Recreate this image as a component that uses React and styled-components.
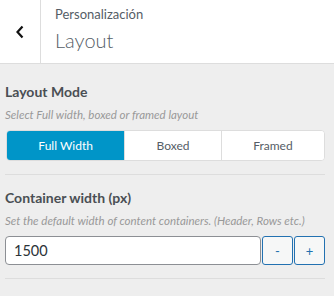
import React, { useState } from 'react';
import styled, { createGlobalStyle } from 'styled-components';

const GlobalStyle = createGlobalStyle`
  body {
    margin: 0;
    background: #eeeeee;
    font-family: Lato, "Open Sans", sans-serif;
    overflow: hidden;
  }
`;

const Header = styled.div`
  display: flex;
  height: 63px;
  background: #fff;
  border-bottom: 1px solid #dddddd;
`;

const BackButton = styled.button`
  width: 41px;
  border: 0;
  border-right: 1px solid #dddddd;
  background: transparent;
  display: flex;
  align-items: center;
  justify-content: center;
  padding: 0;
  cursor: pointer;
`;

const TitleBlock = styled.div`
  padding: 4px 0 0 14px;
  color: #555d66;
`;

const Crumb = styled.div`
  font-size: 13px;
  line-height: 20px;
`;

const Title = styled.div`
  font-size: 20px;
  font-weight: 300;
  line-height: 26px;
  margin-top: 3px;
`;

const Body = styled.div`
  padding: 0 9px 0 5px;
`;

const Section = styled.div`
  padding-top: ${p => p.$first ? 18 : 13}px;
  padding-bottom: 13px;
  border-bottom: 1px solid #dddddd;
`;

const Heading = styled.div`
  font-size: 14px;
  font-weight: 700;
  color: #4a4f54;
  line-height: 20px;
`;

const Desc = styled.div`
  font-size: 11.5px;
  font-style: italic;
  color: #999999;
  line-height: 16px;
  margin: 5px 0 7px;
  white-space: nowrap;
`;

const Group = styled.div`
  display: flex;
  margin-left: 1px;
  height: 29px;
  border: 1px solid #dddddd;
  border-radius: 4px;
  overflow: hidden;
  background: #fff;
`;

const Segment = styled.button`
  flex: 1 1 auto;
  border: 0;
  border-left: ${p => p.$first ? 0 : '1px solid #dddddd'};
  background: ${p => p.$active ? '#0095c8' : '#fff'};
  color: ${p => p.$active ? '#fff' : '#555d66'};
  font-family: inherit;
  font-size: 12px;
  padding: 0;
  cursor: pointer;
`;

const NumberRow = styled.div`
  display: flex;
  height: 29px;
  gap: 1px;
`;

const NumberInput = styled.input`
  flex: 1;
  min-width: 0;
  box-sizing: border-box;
  height: 29px;
  border: 1px solid #8c8f94;
  border-radius: 4px;
  padding: 0 8px;
  font-family: inherit;
  font-size: 14.5px;
  color: #2c3338;
  background: #fff;
`;

const StepButton = styled.button`
  width: 31px;
  height: 29px;
  border: 1px solid #2271b1;
  border-radius: 3px;
  background: #f6f7f7;
  color: #2271b1;
  font-family: inherit;
  font-size: 13px;
  padding: 0;
  cursor: pointer;
`;

const Chevron = () => (
  <svg width="10" height="14" viewBox="0 0 10 14">
    <path d="M7.5 1.5 L2.5 7 L7.5 12.5" fill="none" stroke="#111" strokeWidth="2.2" />
  </svg>
);

const modes = ['Full Width', 'Boxed', 'Framed'];

const App = () => {
  const [mode, setMode] = useState('Full Width');
  const [width, setWidth] = useState(1500);

  return (
    <>
      <GlobalStyle />
      <Header>
        <BackButton aria-label="Back"><Chevron /></BackButton>
        <TitleBlock>
          <Crumb>Personalización</Crumb>
          <Title>Layout</Title>
        </TitleBlock>
      </Header>
      <Body>
        <Section $first>
          <Heading>Layout Mode</Heading>
          <Desc>Select Full width, boxed or framed layout</Desc>
          <Group>
            {modes.map((m, i) => (
              <Segment key={m} $first={i === 0} $active={mode === m} onClick={() => setMode(m)}>
                {m}
              </Segment>
            ))}
          </Group>
        </Section>
        <Section>
          <Heading>Container width (px)</Heading>
          <Desc>Set the default width of content containers. (Header, Rows etc.)</Desc>
          <NumberRow>
            <NumberInput value={width} onChange={e => setWidth(e.target.value)} />
            <StepButton onClick={() => setWidth(w => Number(w) - 1)}>-</StepButton>
            <StepButton onClick={() => setWidth(w => Number(w) + 1)}>+</StepButton>
          </NumberRow>
        </Section>
        <Section>
          <Heading>Content Color</Heading>
        </Section>
      </Body>
    </>
  );
};

export default App;
